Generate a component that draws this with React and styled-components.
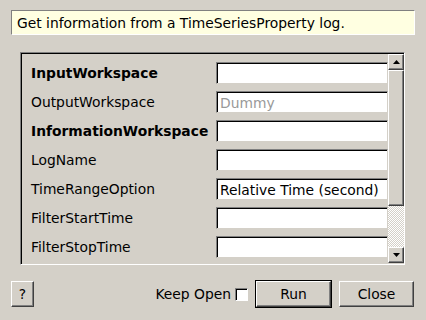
import styled, { createGlobalStyle } from 'styled-components'

const GlobalStyle = createGlobalStyle`
    html, body {
        margin: 0;
        padding: 0;
        background: #d4d0c8;
    }
    body {
        font-family: "DejaVu Sans", "Liberation Sans", sans-serif;
        font-size: 13.85px;
        color: #000;
    }
`

const Dialog = styled.div`
    width: 426px;
    height: 320px;
    box-sizing: border-box;
    padding: 10px 11px 0 11px;
    display: flex;
    flex-direction: column;
`

const Banner = styled.div`
    height: 25px;
    box-sizing: border-box;
    background: #ffffe1;
    border: 1px solid;
    border-color: #808080 #fff #fff #808080;
    padding-left: 5px;
    display: flex;
    align-items: center;
    width: 404px;
`

const Panel = styled.div`
    margin: 17px 0 0 9px;
    width: 385px;
    height: 213px;
    box-sizing: border-box;
    border: 1px solid;
    border-color: #808080 #fff #fff #808080;
    box-shadow: inset 1px 1px 0 #000;
    padding: 1px 0 1px 1px;
    display: flex;
`

const Rows = styled.div`
    flex: 1;
    padding: 8px 0 0 9px;
    display: flex;
    flex-direction: column;
    gap: 7px;
    overflow: hidden;
`

const Row = styled.div`
    display: flex;
    align-items: center;
    height: 22px;
`

const Label = styled.span`
    width: 185px;
    flex-shrink: 0;
    font-weight: ${p => (p.$required ? 'bold' : 'normal')};
    white-space: nowrap;
`

const Field = styled.div`
    flex: 1;
    height: 22px;
    box-sizing: border-box;
    background: #fff;
    border: 1px solid;
    border-color: #808080 #d4d0c8 #d4d0c8 #808080;
    box-shadow: inset 1px 1px 0 #000;
    padding: 1px 0 0 3px;
    display: flex;
    align-items: center;
    color: ${p => (p.$placeholder ? '#999' : '#000')};
    white-space: nowrap;
    overflow: hidden;
`

const ScrollBar = styled.div`
    width: 16px;
    display: flex;
    flex-direction: column;
`

const raised = `
    background: #d4d0c8;
    border: 1px solid;
    border-color: #fff #404040 #404040 #fff;
    box-shadow: inset -1px -1px 0 #808080;
    box-sizing: border-box;
`

const ArrowButton = styled.div`
    ${raised}
    height: 16px;
    display: flex;
    align-items: center;
    justify-content: center;
`

const Thumb = styled.div`
    ${raised}
    height: 136px;
`

const Trough = styled.div`
    flex: 1;
    background-color: #fff;
    background-image: repeating-conic-gradient(#d4d0c8 0 25%, #fff 0 50%);
    background-size: 2px 2px;
`

const Footer = styled.div`
    margin-top: 16px;
    display: flex;
    align-items: center;
    padding-right: 1px;
`

const Button = styled.button`
    ${raised}
    font-family: inherit;
    font-size: 13.85px;
    color: #000;
    padding: 0;
    width: ${p => p.$w}px;
    height: 26px;
    outline: ${p => (p.$default ? '1px solid #000' : 'none')};
    margin-left: ${p => p.$ml || 0}px;
`

const KeepOpen = styled.label`
    margin-left: auto;
    display: flex;
    align-items: center;
    gap: 4px;
`

const Check = styled.span`
    width: 13px;
    height: 13px;
    box-sizing: border-box;
    background: #fff;
    border: 1px solid;
    border-color: #808080 #fff #fff #808080;
    box-shadow: inset 1px 1px 0 #000;
`

const Arrow = ({ down }) => (
    <svg width="7" height="4" viewBox="0 0 7 4">
        <polygon points={down ? '0,0 7,0 3.5,4' : '0,4 7,4 3.5,0'} fill="#000" />
    </svg>
)

const properties = [
    { name: 'InputWorkspace', required: true, value: '' },
    { name: 'OutputWorkspace', value: 'Dummy', placeholder: true },
    { name: 'InformationWorkspace', required: true, value: '' },
    { name: 'LogName', value: '' },
    { name: 'TimeRangeOption', value: 'Relative Time (second)' },
    { name: 'FilterStartTime', value: '' },
    { name: 'FilterStopTime', value: '' },
]

const App = () => (
    <Dialog>
        <GlobalStyle />
        <Banner>Get information from a TimeSeriesProperty log.</Banner>
        <Panel>
            <Rows>
                {properties.map(p => (
                    <Row key={p.name}>
                        <Label $required={p.required}>{p.name}</Label>
                        <Field $placeholder={p.placeholder}>{p.value}</Field>
                    </Row>
                ))}
            </Rows>
            <ScrollBar>
                <ArrowButton><Arrow /></ArrowButton>
                <Thumb />
                <Trough />
                <ArrowButton><Arrow down /></ArrowButton>
            </ScrollBar>
        </Panel>
        <Footer>
            <Button $w={23}>?</Button>
            <KeepOpen>Keep Open <Check /></KeepOpen>
            <Button $w={75} $default $ml={8}>Run</Button>
            <Button $w={75} $ml={8}>Close</Button>
        </Footer>
    </Dialog>
)

export default App
